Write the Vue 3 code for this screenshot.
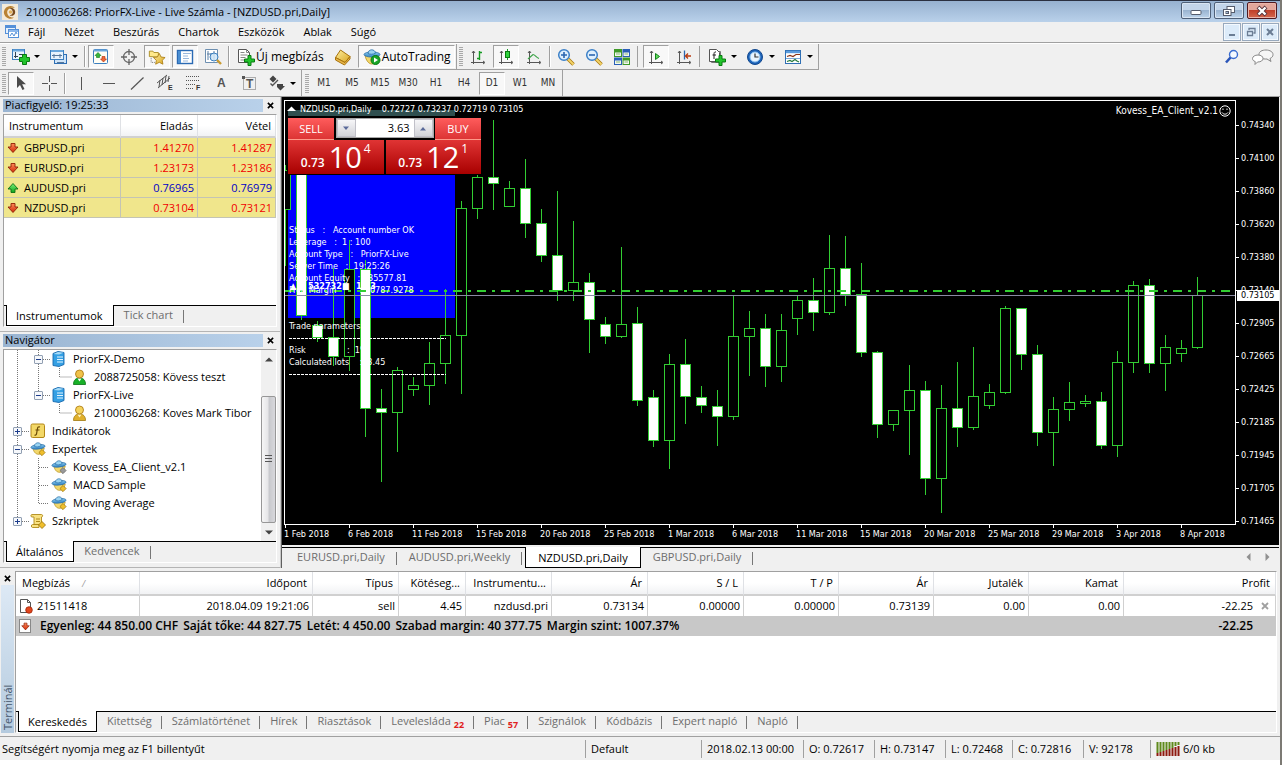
<script setup>
import { ref } from 'vue'

const menus = ['Fájl', 'Nézet', 'Beszúrás', 'Chartok', 'Eszközök', 'Ablak', 'Súgó']

const mainTools = [
  { icon: 'new-chart', caret: true, label: 'Új chart' },
  { icon: 'profiles', caret: true, label: 'Profilok' },
  { sep: true },
  { icon: 'market', on: true, label: 'Piacfigyelő' },
  { icon: 'target', label: 'Adatablak' },
  { icon: 'favorites', on: true, label: 'Navigátor' },
  { icon: 'terminal', on: true, label: 'Terminál' },
  { icon: 'tester', label: 'Stratégia teszter' },
  { sep: true },
  { icon: 'order', text: 'Új megbízás', label: 'Új megbízás' },
  { icon: 'editor', label: 'MetaEditor' },
  { icon: 'auto', text: 'AutoTrading', on: true, label: 'AutoTrading' },
]
const chartTools = [
  { icon: 'bars', label: 'Oszlop chart' },
  { icon: 'candles', on: true, label: 'Gyertya chart' },
  { icon: 'line', label: 'Vonal chart' },
  { sep: true },
  { icon: 'zoom-in', label: 'Nagyítás' },
  { icon: 'zoom-out', label: 'Kicsinyítés' },
  { icon: 'tiles', label: 'Ablakok elrendezése' },
  { sep: true, wide: true },
  { icon: 'scroll', on: true, label: 'Automatikus görgetés' },
  { icon: 'shift', label: 'Chart eltolás' },
  { sep: true, wide: true },
  { icon: 'indicators', caret: true, label: 'Indikátorok' },
  { icon: 'clock', caret: true, label: 'Időtáv' },
  { icon: 'template', caret: true, label: 'Sablonok' },
]
const drawTools = [
  { icon: 'cursor', on: true, label: 'Kurzor' },
  { icon: 'cross', label: 'Célkereszt' },
  { sep: true },
  { icon: 'vline', label: 'Függőleges vonal' },
  { icon: 'hline', label: 'Vízszintes vonal' },
  { icon: 'trend', label: 'Trendvonal' },
  { icon: 'channel', label: 'Csatorna' },
  { icon: 'fibo', label: 'Fibonacci' },
  { icon: 'text', label: 'Szöveg' },
  { icon: 'label', label: 'Címke' },
  { icon: 'arrows', caret: true, label: 'Nyilak' },
]
const periods = ['M1', 'M5', 'M15', 'M30', 'H1', 'H4', 'D1', 'W1', 'MN']

const quotes = [
  { name: 'GBPUSD.pri', bid: '1.41270', ask: '1.41287', up: false },
  { name: 'EURUSD.pri', bid: '1.23173', ask: '1.23186', up: false },
  { name: 'AUDUSD.pri', bid: '0.76965', ask: '0.76979', up: true },
  { name: 'NZDUSD.pri', bid: '0.73104', ask: '0.73121', up: false },
]

const tree = [
  { level: 2, box: 'minus', icon: 'server', text: 'PriorFX-Demo' },
  { level: 3, icon: 'user-green', text: '2088725058: Kövess teszt' },
  { level: 2, box: 'minus', icon: 'server', text: 'PriorFX-Live' },
  { level: 3, icon: 'user-gold', text: '2100036268: Koves Mark Tibor' },
  { level: 1, box: 'plus', icon: 'func', text: 'Indikátorok' },
  { level: 1, box: 'minus', icon: 'expert', text: 'Expertek' },
  { level: 2, icon: 'expert-gray', text: 'Kovess_EA_Client_v2.1' },
  { level: 2, icon: 'expert', text: 'MACD Sample' },
  { level: 2, icon: 'expert', text: 'Moving Average' },
  { level: 1, box: 'plus', icon: 'script', text: 'Szkriptek' },
]

// [high, body top, body bottom, low, falling]
const bars = [
  [165, 170, 209, 265, 0], [140, 150, 315, 319, 1], [321, 325, 337, 341, 1],
  [268, 337, 356, 365, 1], [240, 269, 356, 370, 0], [260, 269, 408, 436, 1],
  [389, 408, 412, 481, 1], [367, 370, 412, 451, 0], [377, 385, 389, 395, 0],
  [342, 363, 385, 404, 0], [289, 335, 363, 383, 0], [201, 208, 335, 393, 0],
  [160, 177, 208, 218, 0], [120, 177, 183, 209, 1], [181, 188, 206, 206, 0],
  [159, 188, 223, 237, 1], [209, 223, 255, 261, 1], [191, 255, 290, 300, 1],
  [221, 282, 290, 300, 0], [273, 282, 319, 352, 1], [317, 324, 336, 343, 1],
  [247, 324, 336, 337, 0], [307, 323, 400, 405, 1], [390, 397, 440, 446, 1],
  [354, 364, 440, 468, 0], [339, 364, 396, 423, 1], [386, 397, 405, 412, 1],
  [390, 406, 416, 445, 1], [295, 336, 416, 419, 0], [311, 328, 336, 375, 0],
  [314, 328, 366, 386, 1], [314, 330, 366, 381, 0], [295, 300, 318, 334, 0],
  [278, 300, 312, 330, 1], [235, 268, 312, 314, 0], [236, 268, 294, 305, 1],
  [263, 294, 352, 356, 1], [351, 352, 424, 437, 1], [410, 410, 424, 430, 0],
  [365, 390, 410, 454, 0], [381, 390, 478, 494, 1], [385, 408, 478, 512, 0],
  [362, 408, 427, 446, 1], [347, 396, 427, 429, 0], [384, 392, 405, 408, 0],
  [306, 308, 392, 393, 0], [308, 308, 354, 369, 1], [345, 354, 432, 445, 1],
  [397, 409, 432, 465, 0], [382, 402, 409, 420, 0], [395, 401, 403, 406, 0],
  [392, 401, 445, 448, 1], [351, 362, 445, 456, 0], [281, 285, 362, 372, 0],
  [279, 285, 363, 372, 1], [335, 347, 363, 390, 0], [340, 348, 353, 361, 0],
  [277, 295, 347, 348, 0],
].map(([high, top, bottom, low, falling], i) => ({
  x: 285 + i * 16, high, top, bottom, low, falling,
}))

// [x, baseline, text]
const info = [
  [300, 112, 'NZDUSD.pri,Daily    0.72727 0.73237 0.72719 0.73105'],
  [289, 233, 'Status   :   Account number OK'],
  [289, 245, 'Leverage   :  1 : 100'],
  [289, 257, 'Account Type   :   PriorFX-Live'],
  [289, 269, 'Server Time   :  19:25:26'],
  [289, 281, 'Account Equity   :   35577.81'],
  [289, 293, 'Free Margin         : 30787.9278'],
  [289, 329, 'Trade parameters'],
  [289, 353, 'Risk                :  1%'],
  [289, 365, 'Calculated lots    :  3.45'],
]
const prices = ['0.74340', '0.74100', '0.73860', '0.73620', '0.73380', '0.73140', '0.72905',
  '0.72665', '0.72425', '0.72185', '0.71945', '0.71705', '0.71465']
const dates = ['1 Feb', '6 Feb', '11 Feb', '15 Feb', '20 Feb', '25 Feb', '1 Mar', '6 Mar',
  '11 Mar', '15 Mar', '20 Mar', '25 Mar', '29 Mar', '3 Apr', '8 Apr']

const chartTabs = ['EURUSD.pri,Daily', 'AUDUSD.pri,Weekly', 'NZDUSD.pri,Daily', 'GBPUSD.pri,Daily']
const columns = ['Megbízás', 'Időpont', 'Típus', 'Kötéseg...', 'Instrumentu...', 'Ár', 'S / L',
  'T / P', 'Ár', 'Jutalék', 'Kamat', 'Profit']
const order = ['2018.04.09 19:21:06', 'sell', '4.45', 'nzdusd.pri', '0.73134', '0.00000',
  '0.00000', '0.73139', '0.00', '0.00']
const balance = ['Egyenleg: 44 850.00 CHF', 'Saját tőke: 44 827.75', 'Letét: 4 450.00',
  'Szabad margin: 40 377.75', 'Margin szint: 1007.37%']
const terminalTabs = [
  { text: 'Kereskedés', on: true }, { text: 'Kitettség' }, { text: 'Számlatörténet' },
  { text: 'Hírek' }, { text: 'Riasztások' }, { text: 'Levelesláda', badge: '22' },
  { text: 'Piac', badge: '57' }, { text: 'Szignálok' }, { text: 'Kódbázis' },
  { text: 'Expert napló' }, { text: 'Napló' },
]
const volume = ref('3.63')
</script>

<template>
  <svg class="defs" aria-hidden="true">
    <defs>
      <linearGradient id="g-blue" x1="0" y1="0" x2="0" y2="1"><stop offset="0" stop-color="#8fd0f2" /><stop offset="1" stop-color="#2f80c2" /></linearGradient>
      <linearGradient id="g-gold" x1="0" y1="0" x2="1" y2="1"><stop offset="0" stop-color="#fff0a0" /><stop offset="1" stop-color="#d9a520" /></linearGradient>
      <linearGradient id="g-green" x1="0" y1="0" x2="0" y2="1"><stop offset="0" stop-color="#7df07a" /><stop offset="1" stop-color="#0fa51c" /></linearGradient>
      <linearGradient id="g-red" x1="0" y1="0" x2="0" y2="1"><stop offset="0" stop-color="#ff8a5a" /><stop offset="1" stop-color="#d02a08" /></linearGradient>
    </defs>
    <symbol id="logo" viewBox="0 0 16 16"><rect width="16" height="16" fill="#f4ead8" /><path d="M13 4A6.400 6.400 0 1 0 12 13.500C8 14 5 11.500 5.200 8C5.500 5 9 3 13 4Z" fill="#b98234" /><path d="M7.500 4.500C11 3 14 6 13 9.500C12 12 9 12.500 7.500 11C10 11.200 11.400 9 10.500 7C10 5.600 9 4.600 7.500 4.500Z" fill="#7a4b1d" /><circle cx="8.500" cy="8" r="1.800" fill="#e2b25e" /></symbol>
    <symbol id="mdi" viewBox="0 0 16 16"><rect x="1.500" y="1.500" width="10" height="8" fill="#e6f1fd" stroke="#5590d8" /><path d="M2 3h9" stroke="#5590d8" stroke-width="2" /><rect x="4.500" y="5.500" width="10" height="8" fill="#fff" stroke="#5590d8" /><path d="M5 7h9" stroke="#8db8ec" stroke-width="2" /><path d="M6 12l2-3 2 3 2-4 1 2" fill="none" stroke="#5590d8" /></symbol>
    <symbol id="new-chart" viewBox="0 0 20 18"><rect x="1.500" y="1.500" width="12" height="10" fill="#e8f3fc" stroke="#3c7fbe" /><path d="M2 2.500h11" stroke="#6aa7dc" stroke-width="2" /><path d="M4.500 4v6M3 8.500h4M8 6.500h4" stroke="#345" fill="none" /><path d="M8.500 9.500h3v-3h4v3h3v4h-3v3h-4v-3h-3Z" fill="#22c42c" stroke="#087b10" /></symbol>
    <symbol id="profiles" viewBox="0 0 20 18"><rect x="5.500" y="6.500" width="12" height="9" fill="#cfe4f8" stroke="#2f6fb4" /><rect x="1.500" y="2.500" width="13" height="9" fill="#e8f3fc" stroke="#3c7fbe" /><path d="M2 3h12" stroke="#6aa7dc" stroke-width="2" /><path d="M3 7.500h10M5 6v4M11 6v4M8 14.500h7" stroke="#57779a" fill="none" /></symbol>
    <symbol id="market" viewBox="0 0 18 18"><rect x="1.500" y="1.500" width="14" height="14" rx="1" fill="#fffef5" stroke="#3c7fbe" /><path d="M2 2.500h13" stroke="#6aa7dc" stroke-width="2" /><path d="M6 4.500l3 3H7.500v2H4.500v-2H3Z" fill="#36b53a" stroke="#0c7a18" stroke-width=".6" /><path d="M11.500 14l3-3H13V8.500h-3V11H8.500Z" fill="#ee6a3a" stroke="#b02c08" stroke-width=".6" /></symbol>
    <symbol id="target" viewBox="0 0 18 18"><circle cx="9" cy="9" r="5.500" fill="none" stroke="#666" stroke-width="1.300" /><path d="M9 1v6M9 11v6M1 9h6M11 9h6" stroke="#666" stroke-width="1.300" /></symbol>
    <symbol id="favorites" viewBox="0 0 20 18"><path d="M1.500 8.500v-6h4l1 1.500h5v5Z" fill="#ffe98a" stroke="#a88a20" /><path d="M3.500 10v5h4" stroke="#666" stroke-dasharray="1 1" fill="none" /><path d="M12.500 5l2 4 4.500.6-3.200 3.100.8 4.300-4.100-2.100L8.500 17l.8-4.300L6 9.600l4.500-.6Z" fill="url(#g-gold)" stroke="#a8790c" stroke-width=".9" /></symbol>
    <symbol id="terminal" viewBox="0 0 18 18"><rect x="1.500" y="2.500" width="15" height="13" fill="#fff" stroke="#2a6ab4" stroke-width="1.400" /><rect x="2" y="3" width="3" height="12" fill="#4a8ed2" /><path d="M7 5.500h8M7 8h5M7 10.500h6M7 13h5" stroke="#9ab8dc" /></symbol>
    <symbol id="tester" viewBox="0 0 18 18"><path d="M1.500 1.500h12v13h-12Z" fill="#fff" stroke="#6d8fb0" /><path d="M4 3v9M7 5v6M10 3v9M3 6h8" stroke="#5b7ea3" /><circle cx="10" cy="9" r="4" fill="#cfe6f8" fill-opacity=".85" stroke="#3a7fc0" /><path d="M13 12l4 4" stroke="#c99a30" stroke-width="2.400" /></symbol>
    <symbol id="order" viewBox="0 0 18 18"><path d="M1.500 1.500h8l3 3v10h-11Z" fill="#fff" stroke="#555" /><path d="M9.500 1.500v3h3M3.500 4.500h4M3.500 7h7M3.500 9.500h5M3.500 12h4" stroke="#888" fill="none" /><path d="M7.500 11h3.500V7.500h3V11h3.500v3h-3.500v3.500h-3V14H7.500Z" fill="#22c42c" stroke="#087b10" /></symbol>
    <symbol id="editor" viewBox="0 0 18 18"><path d="M1.500 9.500l5-7.500 9.500 6.500-5 6Z" fill="url(#g-gold)" stroke="#a8730c" /><path d="M1.500 9.500v2.500l9 5 5.500-6V8.500l-5 6Z" fill="#e8b64a" stroke="#a8730c" /></symbol>
    <symbol id="expert" viewBox="0 0 18 18"><path d="M3 7c1 5 3 8 7 8 3 0 5-3 6-7Z" fill="#f2d76c" stroke="#b58f1c" stroke-width=".8" /><ellipse cx="9" cy="6.500" rx="8" ry="2.600" fill="url(#g-blue)" stroke="#2a6fa8" stroke-width=".8" transform="rotate(-6 9 6.500)" /><path d="M5 6C5 1 12 .5 12.500 5.200 10 6.800 7 7 5 6Z" fill="#9ad4f2" stroke="#2a6fa8" stroke-width=".8" /><path d="M13.500 9.500l3.500 3.500-3.500 3.500L10 13Z" fill="#f0bf2c" stroke="#987009" stroke-width=".8" /></symbol>
    <symbol id="expert-gray" viewBox="0 0 18 18"><path d="M3 7c1 5 3 8 7 8 3 0 5-3 6-7Z" fill="#f2d76c" stroke="#b58f1c" stroke-width=".8" /><ellipse cx="9" cy="6.500" rx="8" ry="2.600" fill="url(#g-blue)" stroke="#2a6fa8" stroke-width=".8" transform="rotate(-6 9 6.500)" /><path d="M5 6C5 1 12 .5 12.500 5.200 10 6.800 7 7 5 6Z" fill="#9ad4f2" stroke="#2a6fa8" stroke-width=".8" /><path d="M13.500 9.500l3.500 3.500-3.500 3.500L10 13Z" fill="#999" stroke="#666" stroke-width=".8" /></symbol>
    <symbol id="auto" viewBox="0 0 18 18"><path d="M2 7c1 6 4 9 7 9 3 0 6-4 7-8Z" fill="#f2d76c" stroke="#b58f1c" stroke-width=".8" /><ellipse cx="9" cy="6.500" rx="8" ry="2.600" fill="url(#g-blue)" stroke="#2a6fa8" stroke-width=".8" /><path d="M5 5.500C5 .8 12 .5 12.500 5.200 10 6.500 7 6.500 5 5.500Z" fill="#9ad4f2" stroke="#2a6fa8" stroke-width=".8" /><circle cx="12.500" cy="12" r="4.500" fill="#19a528" stroke="#087b10" /><path d="M11 9.500l4 2.500-4 2.500Z" fill="#fff" /></symbol>
    <symbol id="bars" viewBox="0 0 18 18"><path d="M4.500 3v13M2 14.500h13M3 5l1.500-2L6 5M14 13l2 1.500-2 1.500" stroke="#555" fill="none" /><path d="M10.500 3v9M8 10.500h2.500M10.500 4.500H13" stroke="#159a22" stroke-width="1.400" fill="none" /></symbol>
    <symbol id="candles" viewBox="0 0 18 18"><path d="M4.500 3v13M2 14.500h13M3 5l1.500-2L6 5M14 13l2 1.500-2 1.500" stroke="#555" fill="none" /><path d="M10.500 1v11" stroke="#159a22" /><rect x="8.500" y="3.500" width="4" height="6" fill="#2fd23c" stroke="#087b10" /></symbol>
    <symbol id="line" viewBox="0 0 18 18"><path d="M4.500 3v13M2 14.500h13M3 5l1.500-2L6 5M14 13l2 1.500-2 1.500" stroke="#555" fill="none" /><path d="M3 11l5-4.500c2 0 3 3 6 4" stroke="#3aa346" stroke-width="1.200" fill="none" /></symbol>
    <symbol id="zoom-in" viewBox="0 0 18 18"><path d="M10.500 10.500l6 6" stroke="#a87910" stroke-width="3.600" /><path d="M10.500 10.500l6 6" stroke="#f4d468" stroke-width="2" /><circle cx="7" cy="7" r="5.300" fill="#dff0fd" stroke="#3c80c8" stroke-width="1.500" /><path d="M4 7h6M7 4v6" stroke="#2a66b0" stroke-width="1.600" /></symbol>
    <symbol id="zoom-out" viewBox="0 0 18 18"><path d="M10.500 10.500l6 6" stroke="#a87910" stroke-width="3.600" /><path d="M10.500 10.500l6 6" stroke="#f4d468" stroke-width="2" /><circle cx="7" cy="7" r="5.300" fill="#dff0fd" stroke="#3c80c8" stroke-width="1.500" /><path d="M4 7h6" stroke="#2a66b0" stroke-width="1.600" /></symbol>
    <symbol id="tiles" viewBox="0 0 18 18"><rect x="1" y="1" width="8" height="8" fill="#3f9a28" /><rect x="9.500" y="1" width="7.500" height="8" fill="#2a5fb8" /><rect x="1" y="9.500" width="8" height="7.500" fill="#2a5fb8" /><rect x="9.500" y="9.500" width="7.500" height="7.500" fill="#3f9a28" /><path d="M2 4.500h6v3.500H2ZM10.500 4.500h5.500v3.500h-5.500ZM2 12.500h6v3.500H2ZM10.500 12.500h5.500v3.500h-5.500Z" fill="#f2f8ee" /><path d="M3 6h4M11.500 6h3.500M3 14h4M11.500 14h3.500" stroke="#89b877" /></symbol>
    <symbol id="scroll" viewBox="0 0 18 18"><path d="M4.500 3v13M2 14.500h13M3 5l1.500-2L6 5M14 13l2 1.500-2 1.500" stroke="#555" fill="none" /><path d="M8.500 5.500l4 3-4 3Z" fill="#5fdc5a" stroke="#15801c" /></symbol>
    <symbol id="shift" viewBox="0 0 18 18"><path d="M4.500 3v13M2 14.500h13M3 5l1.500-2L6 5M14 13l2 1.500-2 1.500" stroke="#555" fill="none" /><path d="M9.500 2.500v9" stroke="#2a66b0" stroke-width="1.300" /><path d="M10.500 8H16M13 5.500L10.500 8l2.500 2.500" stroke="#b83a10" stroke-width="1.300" fill="none" /></symbol>
    <symbol id="indicators" viewBox="0 0 20 18"><path d="M3.500 3.500h9v11h-9Z" fill="#fff" stroke="#777" /><path d="M1.500 1.500h7l3 3v9h-10Z" fill="#fff" stroke="#555" /><path d="M8 4c-2-.5-2 1-2 3v4M4.500 7H8" fill="none" stroke="#222" /><path d="M7.500 11H11V7.500h3V11h3.500v3H14v3.500h-3V14H7.500Z" fill="#22c42c" stroke="#087b10" /></symbol>
    <symbol id="clock" viewBox="0 0 20 18"><circle cx="9" cy="9" r="7.500" fill="#1c62b8" stroke="#12488e" /><circle cx="9" cy="9" r="5" fill="#e8f4ff" stroke="#8cc0ee" /><path d="M9 5.500V9h3.500" stroke="#333" stroke-width="1.200" fill="none" /></symbol>
    <symbol id="template" viewBox="0 0 20 18"><rect x="1.500" y="2.500" width="15" height="13" fill="#fff" stroke="#2f6fb4" /><path d="M2 4h14" stroke="#5b9bdc" stroke-width="2.400" /><path d="M3 8.500l3-1 3 1 3-2 4 0" fill="none" stroke="#8a3418" stroke-width="1.200" /><path d="M2 10.500h14" stroke="#7aa7d8" /><path d="M3 13.500l3-1 2 1 3-2 2 1.500 2 1" fill="none" stroke="#267a3a" stroke-width="1.200" /></symbol>
    <symbol id="cursor" viewBox="0 0 18 18"><path d="M5 2v12l3-3 2.500 5 2-1-2.400-4.800H14Z" fill="#4a4a4a" /></symbol>
    <symbol id="cross" viewBox="0 0 18 18"><path d="M9.500 2v6M9.500 11v6M2 9.500h6M11 9.500h6" stroke="#555" /></symbol>
    <symbol id="vline" viewBox="0 0 18 18"><path d="M9.500 3v13" stroke="#555" /></symbol>
    <symbol id="hline" viewBox="0 0 18 18"><path d="M3 9.500h12" stroke="#555" /></symbol>
    <symbol id="trend" viewBox="0 0 18 18"><path d="M3 15.500L15.500 3.500" stroke="#555" stroke-width="1.200" /></symbol>
    <symbol id="channel" viewBox="0 0 18 18"><path d="M1 9L11 1M2 14L14 4M4 6l-1 7M7 4L6 11M10 2L9 9M13 2l-1 6" stroke="#555" fill="none" /><text x="12" y="16" font-size="7" font-weight="700" fill="#333">E</text></symbol>
    <symbol id="fibo" viewBox="0 0 18 18"><path d="M2 2.500h13M2 6.500h13M2 10.500h9M2 14.500h8" stroke="#555" stroke-dasharray="1 1" /><text x="12" y="16" font-size="7" font-weight="700" fill="#333">F</text></symbol>
    <symbol id="text" viewBox="0 0 18 18"><text x="5" y="13" font-size="12" font-weight="700" fill="#555">A</text></symbol>
    <symbol id="label" viewBox="0 0 18 18"><rect x="3.500" y="3.500" width="12" height="12" fill="none" stroke="#666" stroke-dasharray="1 1" /><path d="M2 2h3v3H2Z" fill="#555" /><text x="6" y="14" font-size="12" font-weight="700" fill="#555">T</text></symbol>
    <symbol id="arrows" viewBox="0 0 20 18"><path d="M6 1.500L9.500 5 6 8.500 2.500 5Z" fill="#444" /><path d="M3.500 9.500l2 2L11 6" stroke="#555" stroke-width="1.400" fill="none" /><path d="M10 10h6v2h2l-4.500 4.500L10 13Z" fill="#444" /></symbol>
    <symbol id="down" viewBox="0 0 12 12"><path d="M4 1.500h4V5h3L6 10.500 1 5h3Z" fill="url(#g-red)" stroke="#8e1f06" stroke-width=".9" /></symbol>
    <symbol id="up" viewBox="0 0 12 12"><path d="M4 10.500h4V7h3L6 1.500 1 7h3Z" fill="url(#g-green)" stroke="#0b6f14" stroke-width=".9" /></symbol>
    <symbol id="server" viewBox="0 0 16 16"><path d="M2 2.500L7 .5l6 1v12L8 15.500l-6-1Z" fill="#35a0e4" stroke="#1769ae" stroke-width=".9" /><path d="M2.500 3L7 1l5.500.800L8 3.500Z" fill="#a9dcf8" /><path d="M6 6h6M6 8.500h6M6 11h6" stroke="#e6f6ff" stroke-width="1.200" /></symbol>
    <symbol id="user-green" viewBox="0 0 16 16"><path d="M1.500 15.500c0-4 2-6.500 6-6.500s6 2.500 6 6.500Z" fill="#18b128" stroke="#077012" stroke-width=".8" /><path d="M5.500 9.500l2 3 2-3Z" fill="#fff" /><circle cx="7.500" cy="5" r="4" fill="#f0c24a" stroke="#a8730c" stroke-width=".8" /></symbol>
    <symbol id="user-gold" viewBox="0 0 16 16"><path d="M1.500 15.500c0-4 2-6.500 6-6.500s6 2.500 6 6.500Z" fill="#e0b02c" stroke="#a07810" stroke-width=".8" /><path d="M5.500 9.500l2 3 2-3Z" fill="#fff3c0" /><circle cx="7.500" cy="5" r="4" fill="#f4d35c" stroke="#a8730c" stroke-width=".8" /></symbol>
    <symbol id="func" viewBox="0 0 16 16"><rect x="1" y="1" width="13.500" height="13.500" rx="1.500" fill="#f3d868" stroke="#b48818" /><path d="M10 4c-2-.8-2.400.6-2.700 2.500L6.500 11c-.3 1-1 1.400-2 1M5.500 7h4" fill="none" stroke="#6b4a05" stroke-width="1.200" /></symbol>
    <symbol id="script" viewBox="0 0 16 16"><path d="M2 1.500h9.500c1.500 0 1.500 2.500 0 2.500v7.500H4V4H2C.5 4 .5 1.500 2 1.500ZM2.500 11.500H9v3H2.500c-1.500 0-1.500-3 0-3Z" fill="#f8e182" stroke="#b08a1a" stroke-width=".9" /><path d="M6 6h4M6 8.500h4" stroke="#b08a1a" /><path d="M12 8.500l3.500 3.500-3.500 3.500L8.500 12Z" fill="#f0bf2c" stroke="#987009" stroke-width=".8" /></symbol>
    <symbol id="sheet" viewBox="0 0 16 16"><path d="M2.500 1.500h7l3 3v10h-10Z" fill="#fff" stroke="#555" /><path d="M9.500 1.500v3h3" fill="none" stroke="#555" /><circle cx="11" cy="12" r="3.300" fill="#e2451c" stroke="#a02408" stroke-width=".8" /></symbol>
    <symbol id="close" viewBox="0 0 8 8"><path d="M1 1l6 6M7 1L1 7" stroke="currentColor" stroke-width="1.800" /></symbol>
  </svg>

  <div class="window">
    <header class="titlebar">
      <svg class="i16"><use href="#logo" /></svg>
      <h1>2100036268: PriorFX-Live - Live Számla - [NZDUSD.pri,Daily]</h1>
      <div class="winbtns">
        <button aria-label="Kis méret"><svg viewBox="0 0 14 12"><rect x="2" y="5.500" width="10" height="4" rx="1" fill="#fff" stroke="#555b6b" /></svg></button>
        <button aria-label="Előző méret"><svg viewBox="0 0 14 12"><rect x="5" y="1.500" width="7.500" height="6" fill="#fff" stroke="#555b6b" /><rect x="1.500" y="4.500" width="7.500" height="6" fill="#fff" stroke="#555b6b" /><rect x="4" y="6.500" width="2.500" height="2" fill="#9fb6d1" stroke="#555b6b" /></svg></button>
        <button class="red" aria-label="Bezárás"><svg viewBox="0 0 14 12"><path d="M3 2l8 8M11 2l-8 8" stroke="#55323a" stroke-width="4" /><path d="M3.500 2.500l7 7M10.500 2.500l-7 7" stroke="#fff" stroke-width="2.400" /></svg></button>
      </div>
    </header>

    <nav class="menubar">
      <svg class="i16"><use href="#mdi" /></svg>
      <div class="menus"><button v-for="m in menus" :key="m">{{ m }}</button></div>
      <div class="mdibtns">
        <button aria-label="Kis méret"><svg viewBox="0 0 10 10"><path d="M2 8h6" stroke="#6b7d94" stroke-width="2" /></svg></button>
        <button aria-label="Előző méret"><svg viewBox="0 0 10 10"><path d="M3 3V1.500h6V6H7.500M1.500 4.500h5v4h-5ZM1 4.500h6" stroke="#6b7d94" fill="none" stroke-width="1.300" /></svg></button>
        <button aria-label="Bezárás"><svg viewBox="0 0 10 10"><path d="M2 2l6 6M8 2L2 8" stroke="#6b7d94" stroke-width="2" /></svg></button>
      </div>
    </nav>

    <div class="toolrow">
      <div v-for="(group, g) in [mainTools, chartTools]" :key="g" class="group">
        <i class="grip"></i>
        <template v-for="(t, i) in group" :key="i">
          <i v-if="t.sep" class="sep" :class="{ wide: t.wide }"></i>
          <button v-else class="tool" :class="{ on: t.on, caret: t.caret, texty: t.text }" :aria-label="t.label">
            <svg><use :href="'#' + t.icon" /></svg><span v-if="t.text">{{ t.text }}</span>
          </button>
        </template>
      </div>
      <div class="toolend">
        <button aria-label="Keresés"><svg viewBox="0 0 16 16"><circle cx="10.500" cy="5.500" r="4" fill="#f4f9ff" stroke="#3a6cd0" stroke-width="1.400" /><path d="M7.500 8.500L3 13.500" stroke="#2a55b8" stroke-width="2.600" /></svg></button>
        <button aria-label="Üzenetek"><svg class="chat" viewBox="0 0 24 18"><path d="M15 2c4 0 7 2 7 4.500 0 2-1 3-3 4l1 3-4-2.500c-5 .3-8-1.500-8-4.500S11 2 15 2Z" fill="#f6f6f6" stroke="#888" /><path d="M7 7c3 0 5 1.500 5 3.500S10 14 6.500 14L4 16.500 4.200 13.500C2.500 13 1.500 12 1.500 10.500 1.500 8.500 4 7 7 7Z" fill="#fff" stroke="#888" /></svg></button>
      </div>
    </div>

    <div class="toolrow second">
      <div class="group">
        <i class="grip"></i>
        <template v-for="(t, i) in drawTools" :key="i">
          <i v-if="t.sep" class="sep"></i>
          <button v-else class="tool" :class="{ on: t.on, caret: t.caret }" :aria-label="t.label"><svg><use :href="'#' + t.icon" /></svg></button>
        </template>
      </div>
      <div class="group spaced">
        <i class="grip"></i>
        <button v-for="p in periods" :key="p" class="tool period" :class="{ on: p === 'D1' }">{{ p }}</button>
      </div>
    </div>

    <main class="work">
      <aside>
        <section class="panel market">
          <header><h2>Piacfigyelő: 19:25:33</h2><button aria-label="Bezárás"><svg><use href="#close" /></svg></button></header>
          <div class="frame">
            <div class="fill">
              <table class="quotes">
                <colgroup><col /><col class="cb" /><col class="ca" /></colgroup>
                <thead><tr><th>Instrumentum</th><th>Eladás</th><th>Vétel</th></tr></thead>
                <tbody>
                  <tr v-for="q in quotes" :key="q.name" :class="{ rise: q.up }">
                    <td><span><svg><use :href="q.up ? '#up' : '#down'" /></svg>{{ q.name }}</span></td>
                    <td>{{ q.bid }}</td><td>{{ q.ask }}</td>
                  </tr>
                </tbody>
              </table>
            </div>
            <div class="tabs"><button class="on">Instrumentumok</button><button>Tick chart</button></div>
          </div>
        </section>

        <section class="panel navigator">
          <header><h2>Navigátor</h2><button aria-label="Bezárás"><svg><use href="#close" /></svg></button></header>
          <div class="frame">
            <div class="fill treebox">
              <div class="tree">
                <ul>
                  <li v-for="n in tree" :key="n.text" :class="'l' + n.level">
                    <button v-if="n.box" class="box" :class="n.box" :aria-label="n.text"></button>
                    <i v-else class="nobox"></i>
                    <svg><use :href="'#' + n.icon" /></svg>{{ n.text }}
                  </li>
                </ul>
                <svg class="lines" aria-hidden="true"><path d="M13.500 0v172M34.500 0v46M55.500 18v9h12M55.500 54v9h12M39 9.500h8M39 45.500h8M18 81.500h8M18 99.500h8M34.500 108v46M35 117.500h10M35 135.500h10M35 153.500h10M18 171.500h8" /></svg>
              </div>
              <div class="scroll">
                <button aria-label="Fel"><svg viewBox="0 0 8 5"><path d="M0 4.500L4 .5l4 4Z" /></svg></button>
                <div class="track"><div class="thumb"><i></i></div></div>
                <button aria-label="Le"><svg viewBox="0 0 8 5"><path d="M0 .5l4 4 4-4Z" /></svg></button>
              </div>
            </div>
            <div class="tabs"><button class="on">Általános</button><button>Kedvencek</button></div>
          </div>
        </section>
      </aside>

      <section class="chartcol">
        <div class="chart">
          <div class="plot">
            <svg class="candles">
              <g transform="translate(-285 -101)">
                <rect x="288" y="110" width="167" height="6" fill="#2f4f4f" />
                <rect x="288" y="174" width="167" height="144" fill="#00f" />
                <g v-for="b in bars" :key="b.x" class="bar">
                  <rect class="wick" :x="b.x" :y="b.high" width="1" :height="b.low + 1 - b.high" />
                  <rect class="body" :x="b.x - 4.5" :y="b.top + 0.5" width="10" :height="b.bottom - b.top" :class="{ fall: b.falling }" />
                </g>
                <path class="bid" d="M285 295.500h951" />
                <path class="level" d="M285 291h946" />
                <path class="rule" d="M289 338.500h157M289 374.500h157" />
                <text v-for="t in info" :key="t[1]" :x="t[0]" :y="t[1]">{{ t[2] }}</text>
                <text class="ticket" y="289"><tspan x="290">▲</tspan><tspan x="308">532732</tspan><tspan x="342">■</tspan><tspan x="356">1.33</tspan></text>
                <path d="M287 111l4.500-4.500 4.500 4.500Z" fill="#fff" />
              </g>
            </svg>
            <div class="ea">Kovess_EA_Client_v2.1<svg viewBox="0 0 14 14"><circle cx="7" cy="7" r="5.200" /><path d="M4 8.500c1.500 2.200 4.500 2.200 6 0M5 4.500v1.500M9 4.500v1.500" /></svg></div>
            <div class="trade">
              <div class="top">
                <button class="side">SELL</button>
                <div class="vol">
                  <button aria-label="Csökkentés"><svg viewBox="0 0 8 5"><path d="M1 .5l3 3.500L7 .5Z" /></svg></button>
                  <input v-model="volume" aria-label="Mennyiség" />
                  <button aria-label="Növelés"><svg viewBox="0 0 8 5"><path d="M1 4.500L4 1l3 3.500Z" /></svg></button>
                </div>
                <button class="side">BUY</button>
              </div>
              <div class="prices">
                <button><b>0.73</b><strong>10</strong><sup>4</sup></button>
                <button><b>0.73</b><strong>12</strong><sup>1</sup></button>
              </div>
            </div>
          </div>
          <div class="paxis">
            <span v-for="p in prices" :key="p">{{ p }}</span>
            <em>0.73105</em>
          </div>
          <div class="taxis"><span v-for="d in dates" :key="d">{{ d }} 2018</span></div>
        </div>
        <div class="tabs charttabs">
          <button v-for="t in chartTabs" :key="t" :class="{ on: t === 'NZDUSD.pri,Daily' }">{{ t }}</button>
          <div class="arrows">
            <button aria-label="Balra"><svg viewBox="0 0 5 8"><path d="M4.500 0v8L.5 4Z" /></svg></button>
            <button aria-label="Jobbra"><svg viewBox="0 0 5 8"><path d="M.5 0v8l4-4Z" /></svg></button>
          </div>
        </div>
      </section>
    </main>

    <section class="terminal">
      <div class="strip"><button aria-label="Bezárás"><svg><use href="#close" /></svg></button><h2>Terminál</h2></div>
      <div class="frame">
        <div class="fill">
          <table class="orders">
            <colgroup><col v-for="n in 12" :key="n" :class="'c' + n" /></colgroup>
            <thead><tr><th v-for="(c, i) in columns" :key="i">{{ c }}<i v-if="i === 0">/</i></th></tr></thead>
            <tbody>
              <tr>
                <td><span><svg class="i16"><use href="#sheet" /></svg>21511418</span></td>
                <td v-for="(v, i) in order" :key="i">{{ v }}</td>
                <td><span class="profit">-22.25<button aria-label="Pozíció zárása"><svg><use href="#close" /></svg></button></span></td>
              </tr>
              <tr class="sum">
                <td colspan="11"><span><i class="mark"><svg><use href="#down" /></svg></i><span class="bal"><b v-for="b in balance" :key="b">{{ b }}</b></span></span></td>
                <td><b>-22.25</b></td>
              </tr>
            </tbody>
          </table>
        </div>
        <div class="tabs">
          <button v-for="t in terminalTabs" :key="t.text" :class="{ on: t.on }">{{ t.text }}<sub v-if="t.badge">{{ t.badge }}</sub></button>
        </div>
      </div>
    </section>

    <footer class="status">
      <span class="help">Segítségért nyomja meg az F1 billentyűt</span>
      <span class="s1">Default</span><span class="s2">2018.02.13 00:00</span>
      <span class="s3">O: 0.72617</span><span class="s3">H: 0.73147</span><span class="s4">L: 0.72468</span>
      <span class="s3">C: 0.72816</span><span class="s4">V: 92178</span>
      <span class="s5"><svg viewBox="0 0 24 14"><path d="M.5 0h2v11h-2ZM3.500 0h2v10h-2ZM6.500 0h2v9h-2ZM9.500 0h2v8h-2ZM12.500 0h2v7h-2ZM15.500 0h2v6h-2ZM18.500 0h2v4h-2ZM21.500 0h2v3h-2Z" fill="#5f8a1c" /><path d="M.5 11h2v3h-2ZM3.500 10h2v4h-2ZM6.500 9h2v5h-2ZM9.500 8h2v6h-2ZM12.500 7h2v7h-2ZM15.500 6h2v8h-2ZM18.500 5h2v9h-2ZM21.500 4h2v10h-2Z" fill="#8e1a10" /></svg>6/0 kb</span>
    </footer>
  </div>
</template>

<style>
html, body { background: #fff; }
</style>

<style scoped>
* { box-sizing: border-box; }
.defs { position: absolute; width: 0; height: 0; }
.window {
  display: flex; flex-direction: column; min-height: 100vh; margin-right: 2px; padding-bottom: 5px;
  border-right: 2px solid #7c7a74; background: linear-gradient(#fff, #fff) bottom / 100% 5px no-repeat #f0f0f0;
  font: 11px/16px "Open Sans", "Noto Sans", sans-serif; color: #000;
}
button { font: inherit; color: inherit; background: none; border: 0; padding: 0; margin: 0; display: flex; align-items: center; justify-content: center; white-space: nowrap; }
h1, h2 { font-size: inherit; font-weight: 400; margin: 0; }
svg { display: block; flex: none; }
.i16 { width: 16px; height: 16px; }

.titlebar { height: 22px; display: flex; align-items: center; gap: 8px; padding: 0 3px 0 2px; border-top: 1px solid #2b3040; background: linear-gradient(#97b1d0, #b9d1ea); }
.titlebar h1 { flex: 1; }
.winbtns { display: flex; gap: 3px; align-self: flex-start; padding-top: 1px; }
.winbtns button { width: 30px; height: 17px; border: 1px solid #4f6078; border-radius: 2px; background: linear-gradient(#c3d5ea 45%, #9ab4d1 50%, #bdd3ea); box-shadow: inset 0 0 0 1px #d9e5f3; }
.winbtns svg { width: 14px; height: 12px; }
.winbtns .red { border-color: #501a20; background: linear-gradient(#e3a79b 45%, #c0402a 50%, #d4694f); box-shadow: inset 0 0 0 1px #eab5aa; }

.menubar { height: 21px; display: flex; align-items: center; padding: 0 1px 0 4px; border-bottom: 1px solid #a0a0a0; }
.menus { flex: 1; display: flex; gap: 19px; padding-left: 8px; }
.mdibtns { display: flex; gap: 1px; }
.mdibtns button { width: 18px; height: 18px; border: 1px solid #98a9bd; background: #dcebf9; box-shadow: inset 0 0 0 1px #f3f9ff; }
.mdibtns svg { width: 10px; height: 10px; }

.toolrow { display: flex; height: 27px; border-top: 1px solid #fff; }
.toolrow.second { border-top: 0; border-bottom: 1px solid #a0a0a0; }
.group { display: flex; align-items: center; gap: 2px; padding-left: 2px; padding-right: 1px; border-right: 1px solid #a0a0a0; border-bottom: 1px solid #a0a0a0; }
.group.spaced { padding-left: 3px; }
.second .group { border-bottom: 0; }
.grip { width: 4px; height: 19px; background: repeating-linear-gradient(#a8a8a8 0 1px, #f0f0f0 1px 2px); }
.sep { width: 2px; height: 21px; border-left: 1px solid #a0a0a0; background: #fff; }
.sep.wide { width: 4px; background: none; }
.tool { width: 26px; height: 23px; border: 1px solid transparent; }
.tool svg { width: 18px; height: 18px; font-family: "Liberation Sans", sans-serif; line-height: 1; }
.tool.on { background: #f8f8f8; border-color: #a0a0a0 #fff #fff #a0a0a0; }
.tool.caret { width: 36px; justify-content: flex-start; padding-left: 2px; gap: 2px; }
.tool.caret svg { width: 20px; }
.tool.caret::after { content: ""; margin-left: 1px; border: 3px solid transparent; border-top-color: #000; border-bottom: 0; }
.tool.texty { width: auto; padding: 0 3px 0 4px; gap: 1px; font-size: 12px; }
.tool.period { font-family: "DejaVu Sans Condensed", "DejaVu Sans", sans-serif; font-size: 10px; color: #333; }
.toolend { margin-left: auto; display: flex; align-items: center; gap: 12px; padding-right: 5px; }
.toolend svg { width: 16px; height: 16px; }
.toolend .chat { width: 24px; height: 18px; }

.work { flex: 1; display: grid; grid-template-columns: 281px 1fr; min-height: 0; }
aside { display: flex; flex-direction: column; border-right: 1px solid #c8c8c8; }
.panel { display: flex; flex-direction: column; padding: 2px 3px 4px; border-bottom: 1px solid #b4b4b4; }
.market { height: 235px; }
.navigator { flex: 1; }
.panel header { display: flex; align-items: center; height: 13px; margin-bottom: 2px; }
.panel h2 { flex: none; width: 260px; height: 13px; line-height: 12px; padding-left: 2px; background: linear-gradient(90deg, #99b4d1, #b9d1ea); }
.panel header button { width: 16px; height: 13px; }
.panel header svg, .strip svg { width: 7px; height: 7px; }
.frame { flex: 1; display: flex; flex-direction: column; border: 1px solid #a0a0a0; border-right-color: #fff; border-bottom-color: #fff; min-width: 0; }
.fill { flex: 1; background: #fff; min-height: 0; }
table { border-collapse: separate; border-spacing: 0; table-layout: fixed; width: 100%; }
th { font-weight: 400; text-align: right; padding: 0; height: 24px; background: linear-gradient(#fff 50%, #f1f2f4); border-right: 1px solid #dfe1e5; border-bottom: 2px solid #d0d0d0; white-space: nowrap; }
th:first-child { text-align: left; }
td { padding: 0; text-align: right; white-space: nowrap; }
td > span { display: flex; align-items: center; }
.cb { width: 77px; }
.ca { width: 78px; }
.quotes th { height: 23px; padding: 0 4px 0 5px; }
.quotes td { height: 20px; padding-right: 3px; background: #f0e68c; color: #f00000; border-right: 1px solid #c4c4b4; border-bottom: 1px solid #c4c4b4; }
.quotes td:first-child { color: #000; }
.quotes .rise td:not(:first-child) { color: #0000c8; }
.quotes td svg { width: 12px; height: 12px; margin: 0 5px 0 3px; }

.tabs { display: flex; height: 21px; padding-left: 2px; background: #f0f0f0; border-top: 1px solid #000; color: #6d6d6d; }
.tabs > button { position: relative; padding: 0 10px 2px; }
.tabs > button::after { content: ""; position: absolute; right: 0; top: 4px; width: 1px; height: 13px; background: #777; }
.tabs > button.on { margin-top: -1px; padding: 1px 9px 0; background: #fff; color: #000; border: 1px solid #000; border-top: 0; }
.tabs > button.on::after { content: none; }
.panel .tabs > button { padding-right: 11px; }
.panel .tabs > button.on { padding-right: 10px; }
sub { align-self: flex-end; font-size: 9px; line-height: 10px; font-weight: 700; color: #e02020; margin-left: 3px; }

.treebox { display: flex; }
.tree { flex: 1; position: relative; }
ul { list-style: none; margin: 0; padding: 0; }
li { display: flex; align-items: center; height: 18px; white-space: nowrap; position: relative; z-index: 1; }
li svg { width: 16px; height: 16px; margin: 0 6px 0 8px; }
.l1 { padding-left: 9px; }
.l2 { padding-left: 30px; }
.l3 { padding-left: 51px; }
.box, .nobox { flex: none; width: 9px; height: 9px; }
.box { border: 1px solid #919fb2; border-radius: 1px; background: linear-gradient(#1c3c8c, #1c3c8c) center / 5px 1px no-repeat #f6f8fb; }
.box.plus { background: linear-gradient(#1c3c8c, #1c3c8c) center / 5px 1px no-repeat, linear-gradient(#1c3c8c, #1c3c8c) center / 1px 5px no-repeat #f6f8fb; }
.lines { position: absolute; inset: 0; width: 100%; height: 100%; fill: none; stroke: #777; stroke-dasharray: 1 1; }
.scroll { width: 15px; display: flex; flex-direction: column; background: #f0f0f0; }
.scroll button { height: 18px; }
.scroll button svg { width: 8px; height: 5px; fill: #444; }
.track { flex: 1; display: flex; flex-direction: column; justify-content: flex-end; }
.thumb { height: 82%; border: 1px solid #979797; border-radius: 2px; background: linear-gradient(90deg, #f6f6f6, #e6e6e8 45%, #c8c9cd 55%, #d8d8dc); display: flex; align-items: center; justify-content: center; }
.thumb i { width: 7px; height: 8px; background: repeating-linear-gradient(#555 0 1px, transparent 1px 3px); }

.chartcol { display: flex; flex-direction: column; min-width: 0; padding-right: 1px; border-left: 1px solid #606060; }
.chart { flex: 1; display: grid; grid-template: 1fr 20px / 1fr 43px; background: #000; padding: 3px 0 0 2px; color: #fff; font: 9px/12px "DejaVu Sans Condensed", "Open Sans", sans-serif; }
.plot { position: relative; border: 1px solid #fff; min-width: 0; overflow: hidden; }
.candles { position: absolute; inset: 0; width: 100%; height: 100%; }
.bar rect { shape-rendering: crispEdges; }
.wick { fill: #32cd32; }
.body { fill: #000; stroke: #32cd32; }
.body.fall { fill: #fff; }
.bid { stroke: #8a8aa4; }
.level { stroke: #32cd32; stroke-width: 2; stroke-dasharray: 9 6 3 6; }
.rule { stroke: #fff; stroke-dasharray: 3 1; }
.candles text { fill: #fff; white-space: pre; }
.candles .ticket { font-weight: 700; }
.ea { position: absolute; top: 3px; right: 3px; display: flex; align-items: center; font-size: 10px; }
.ea svg { width: 14px; height: 14px; fill: none; stroke: #fff; }
.trade { position: absolute; left: 2px; top: 16px; width: 195px; padding: 1px; background: #000; font: 12px/16px "Open Sans", sans-serif; }
.top { display: flex; justify-content: space-between; }
.side { width: 46px; height: 22px; background: linear-gradient(#ff5c5c, #dc3434); color: #fff; border-bottom: 1px solid #ff9a8a; font-size: 11px; }
.vol { display: flex; width: 98px; height: 20px; border: 1px solid #a8a8a8; background: #fff; }
.vol button { width: 19px; background: linear-gradient(#f6f6f8, #d2d3d8); border: 1px solid #c0c0c8; }
.vol button svg { width: 8px; height: 5px; fill: #5a6a9a; }
.vol input { flex: 1; min-width: 0; border: 0; padding: 0 4px 0 0; text-align: right; font: inherit; font-size: 11px; }
.prices { display: flex; gap: 2px; }
.prices button { flex: 1; height: 34px; align-items: flex-end; padding-bottom: 5px; color: #fff; background: linear-gradient(#e03434, #a80000); }
.prices b { font-size: 12px; font-weight: 600; line-height: 12px; }
.prices strong { font-size: 29px; font-weight: 400; line-height: 24px; margin: 0 2px 0 4px; }
.prices sup { font-size: 12px; line-height: 14px; align-self: flex-start; padding-top: 2px; }
.paxis { position: relative; padding-top: 9px; }
.paxis span { display: block; height: 33px; line-height: 33px; padding-left: 5px; background: linear-gradient(#fff, #fff) 0 16px / 3px 1px no-repeat; }
.paxis span:last-of-type { height: 20px; }
.paxis em { position: absolute; top: 190px; left: 1px; right: 0; height: 11px; line-height: 11px; padding-left: 4px; background: #fff; color: #000; font-style: normal; }
.taxis { grid-column: 1 / 3; display: flex; overflow: hidden; }
.taxis span { flex: none; width: 64px; padding-top: 3px; white-space: nowrap; background: linear-gradient(#fff, #fff) 1px 0 / 1px 3px no-repeat; }
.charttabs { flex: none; margin-top: 2px; padding-left: 3px; }
.charttabs > button { padding: 0 12px 2px; }
.charttabs > button.on { margin-left: 3px; padding: 1px 12px 0; }
.arrows { margin-left: auto; display: flex; gap: 14px; padding: 0 9px 2px 0; }
.arrows svg { width: 5px; height: 8px; fill: #909090; }

.terminal { display: flex; height: 169px; padding: 3px 3px 3px 1px; border-bottom: 1px solid #a0a0a0; }
.strip { width: 14px; display: flex; flex-direction: column; }
.strip button { height: 14px; width: 12px; }
.strip h2 { flex: 1; width: 13px; writing-mode: vertical-rl; transform: rotate(180deg); line-height: 13px; padding-top: 3px; color: #44546a; background: linear-gradient(#b4cade, #dde9f5); }
.c1 { width: 124px; } .c2 { width: 173px; } .c3 { width: 86px; } .c4 { width: 67px; } .c5 { width: 86px; }
.c6, .c7 { width: 96px; } .c8, .c9, .c10, .c11 { width: 95px; }
.orders th { padding: 0 5px; }
.orders th:first-child { padding-left: 6px; }
.orders th i { color: #999; margin-left: 12px; font-size: 9px; }
.orders td { height: 20px; padding-right: 3px; border-right: 1px solid #d0d0d0; }
.orders td:first-child { padding-left: 2px; }
.orders td svg.i16 { margin-right: 3px; }
.orders .profit { justify-content: flex-end; gap: 8px; padding-right: 3px; }
.profit button { color: #a0a0a0; }
.profit svg { width: 8px; height: 8px; }
.orders .sum td { background: #c8c8c8; border: 0; font-size: 12px; }
.orders .sum td:last-child { padding-right: 23px; }
.mark { width: 12px; height: 14px; margin: 0 9px 0 1px; background: #fff; border: 1px solid #888; display: flex; align-items: center; justify-content: center; }
.mark svg { width: 9px; height: 9px; }
.bal { display: flex; gap: 5px; }
.sum b { font-weight: 600; }

.status { display: flex; align-items: center; height: 23px; }
.status span { display: flex; align-items: center; height: 18px; padding-left: 5px; border-left: 1px solid #a0a0a0; }
.status .help { flex: 1; border: 0; padding-left: 2px; }
.status .s1 { width: 116px; } .status .s2 { width: 102px; } .status .s3 { width: 71px; } .status .s4 { width: 67px; } .status .s5 { width: 130px; gap: 3px; }
.s5 svg { width: 24px; height: 14px; }
</style>
